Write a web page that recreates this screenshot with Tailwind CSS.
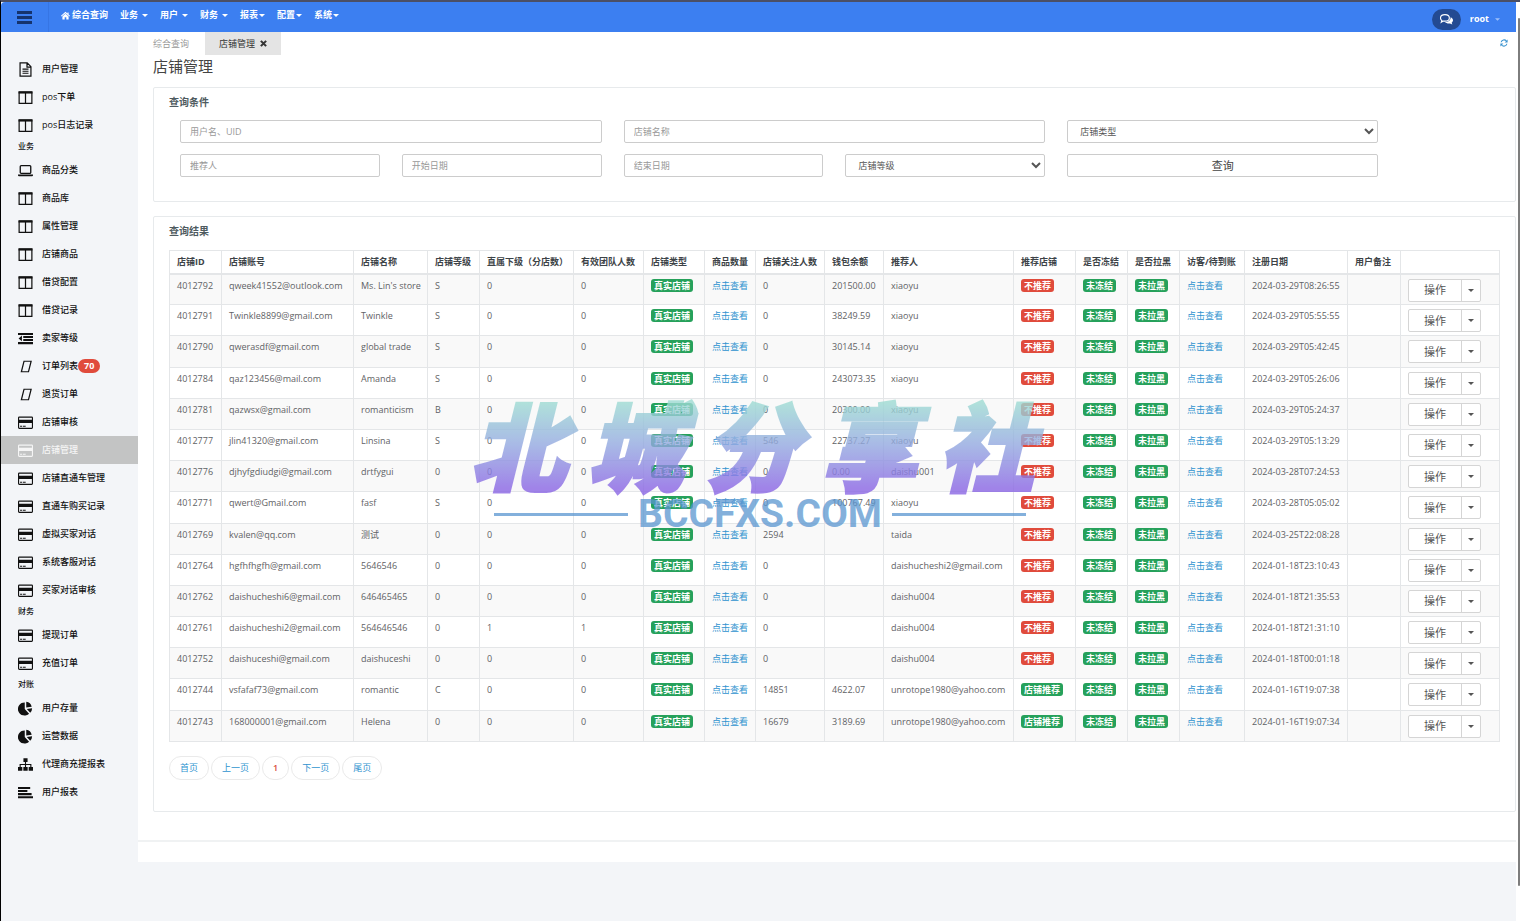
<!DOCTYPE html>
<html lang="zh-CN">
<head>
  <meta charset="UTF-8" />
  <meta name="viewport" content="width=device-width, initial-scale=1.0"/>
  <title>店铺管理</title>
  <script src="https://cdn.jsdelivr.net/npm/@tailwindcss/browser@4"></script>
</head>
<body class="bg-[#f3f5f8] min-h-screen font-['Open_Sans','Noto_Sans_CJK_SC',sans-serif] text-[9px] leading-[14px] text-[#5f6265]">

<!-- Icon sprite -->
<svg class="hidden">
  <symbol id="i-file" viewBox="0 0 16 16"><path d="M2.2 1h7.6l4 4v10H2.2z M9.6 1v4.4h4.2" fill="none" stroke="currentColor" stroke-width="1.3"/><path d="M4.8 7.6h6.4M4.8 9.8h6.4M4.8 12h6.4" stroke="currentColor" stroke-width="1.2"/></symbol>
  <symbol id="i-columns" viewBox="0 0 16 16"><path d="M1.2 2.2h13.6v12H1.2zM8 3v11" fill="none" stroke="currentColor" stroke-width="1.3"/><path d="M.6 1.4h14.8v2.4H.6z" fill="currentColor"/></symbol>
  <symbol id="i-laptop" viewBox="0 0 16 16"><rect x="2.4" y="2.8" width="11.2" height="8.2" rx="1" fill="none" stroke="currentColor" stroke-width="1.4"/><path d="M0 12.2h16v1c0 .5-.7.8-1.5.8h-13C.7 14 0 13.700 0 13.200z" fill="currentColor"/></symbol>
  <symbol id="i-outdent" viewBox="0 0 16 16"><path d="M0 2h16v2.200H0zM5.600 5.200H16v2.200H5.600zM5.600 8.500H16v2.200H5.600zM0 11.800h16V14H0zM4.200 4.900v6L.6 7.900z" fill="currentColor"/></symbol>
  <symbol id="i-slant" viewBox="0 0 16 16"><path d="M6.400 2.400h7.600l-2.800 11.200H3.600z" fill="none" stroke="currentColor" stroke-width="1.300"/></symbol>
  <symbol id="i-card" viewBox="0 0 16 16"><rect x=".6" y="2.200" width="14.800" height="12" rx=".8" fill="none" stroke="currentColor" stroke-width="1.200"/><path d="M.6 5h14.800v3.400H.6zM2.200 11.400h2.200v1.200H2.200zM5.200 11.400h3v1.200h-3z" fill="currentColor"/></symbol>
  <symbol id="i-pie" viewBox="0 0 16 16"><path d="M7.200 1.500v7l4.600 5A7 7 0 1 1 7.200 1.500zM8.800.8A6.600 6.600 0 0 1 14.600 6L8.800 7zM9.400 8.600l5.600-.8a6.600 6.600 0 0 1-2 4.800z" fill="currentColor"/></symbol>
  <symbol id="i-sitemap" viewBox="0 0 16 16"><path d="M5.800 1.400h4.400v4H5.800zM0 10.600h4.600v4H0zM5.700 10.600h4.600v4H5.700zM11.400 10.600H16v4h-4.600z" fill="currentColor"/><path d="M8 5v6M2.300 11V8h11.400v3" fill="none" stroke="currentColor" stroke-width="1.200"/></symbol>
  <symbol id="i-align" viewBox="0 0 16 16"><path d="M0 2h13v2.200H0zM0 5.300h10v2.200H0zM0 8.600h14.500v2.200H0zM0 11.900h16v2.200H0z" fill="currentColor"/></symbol>
  <symbol id="i-home" viewBox="0 0 16 16"><path d="M8 1.500 0 8.500l1 1.200L8 3.800l7 5.900 1-1.200-2.500-2.200V2.500h-2v2zM8 5l-5.500 4.600V15h4v-4h3v4h4V9.600z" fill="currentColor"/></symbol>
  <symbol id="i-caret" viewBox="0 0 8 4"><path d="M0 0h8L4 4z" fill="currentColor"/></symbol>
  <symbol id="i-comments" viewBox="0 0 16 16"><path d="M11.500 6c0 2.500-2.500 4-5.400 4L4 9.900 1.600 11.400l.7-2.200C1.200 8.400.6 7.300.6 6c0-2.400 2.500-4 5.500-4s5.400 1.600 5.400 4z" fill="none" stroke="currentColor" stroke-width="1.400"/><path d="M13 5.200c1.800.8 3 2.100 3 3.700 0 1.200-.7 2.200-1.700 3l.9 2.300-2.900-1.400c-2.500.4-4.800-.2-6.100-1.700 4 .2 7.200-2 6.800-5.900z" fill="currentColor"/></symbol>
  <symbol id="i-refresh" viewBox="0 0 16 16"><path d="M2.200 6.500A6 6 0 0 1 12.800 4M13.800 9.500A6 6 0 0 1 3.200 12" fill="none" stroke="currentColor" stroke-width="2.200"/><path d="M15.200 1v6h-6zM.8 15V9h6z" fill="currentColor"/></symbol>
  <symbol id="i-close" viewBox="0 0 8 8"><path d="M1 1l6 6M7 1L1 7" stroke="currentColor" stroke-width="2.400"/></symbol>
</svg>

<div class="min-h-screen border-l border-l-black border-t-2 border-t-[#4b4f66] pr-1 relative">

  <!-- Top bar -->
  <header class="h-[30px] bg-[#3c7ff1] rounded-tl-sm flex items-center text-white font-bold">
    <button aria-label="菜单" class="w-12 h-full border-r border-[#3675e4] flex items-center justify-center">
      <span class="w-[15px] h-[13px] flex flex-col justify-between">
        <span class="h-[3px] bg-[#15336d]"></span><span class="h-[3px] bg-[#15336d]"></span><span class="h-[3px] bg-[#15336d]"></span>
      </span>
    </button>
    <nav class="flex items-center gap-3 ml-3 pb-1">
      <a href="#" class="flex items-center gap-[2px]"><svg class="size-[9px]"><use href="#i-home"/></svg>综合查询</a>
      <a href="#" class="flex items-center gap-1">业务<svg class="w-[6px] h-[3px]"><use href="#i-caret"/></svg></a>
      <a href="#" class="flex items-center gap-1">用户<svg class="w-[6px] h-[3px]"><use href="#i-caret"/></svg></a>
      <a href="#" class="flex items-center gap-1">财务<svg class="w-[6px] h-[3px]"><use href="#i-caret"/></svg></a>
      <a href="#" class="flex items-center gap-px">报表<svg class="w-[6px] h-[3px]"><use href="#i-caret"/></svg></a>
      <a href="#" class="flex items-center gap-px">配置<svg class="w-[6px] h-[3px]"><use href="#i-caret"/></svg></a>
      <a href="#" class="flex items-center gap-px">系统<svg class="w-[6px] h-[3px]"><use href="#i-caret"/></svg></a>
    </nav>
    <div class="ml-auto flex items-center mr-4 mt-1">
      <button aria-label="消息" class="w-[29px] h-[21px] rounded-full bg-[#234a92] flex items-center justify-center"><svg class="size-[13px]"><use href="#i-comments"/></svg></button>
      <button class="ml-[9px] flex items-center gap-[6px] font-bold">root<svg class="w-[5px] h-[3px] text-[#9fc0fa]"><use href="#i-caret"/></svg></button>
    </div>
  </header>

  <div class="flex items-start">
    <!-- Sidebar -->
    <aside class="w-[137px] shrink-0 pt-[23px] text-[#111]">
      <ul id="menu"></ul>
    </aside>

    <!-- Page -->
    <main class="flex-1 min-w-0 bg-white">
      <div class="pl-[15px]">
        <div class="flex items-start">
          <a href="#" class="leading-[23px] text-[#999]">综合查询</a>
          <a href="#" class="ml-4 h-[23px] px-[14px] bg-[#e4e4e4] flex items-center gap-[5px] text-[#333]">店铺管理<svg class="size-[7px]"><use href="#i-close"/></svg></a>
          <button aria-label="刷新" class="ml-auto mt-[7px] mr-2 text-[#3a93cf]"><svg class="size-2"><use href="#i-refresh"/></svg></button>
        </div>
        <h1 class="text-[15px] leading-[22px] text-[#444]">店铺管理</h1>
      </div>

      <!-- Search form -->
      <section class="mt-[10px] ml-[15px] h-[115px] border border-[#e7eaec] rounded-xs px-[15px] pt-[7px]">
        <h2 class="text-[10px] font-bold text-[#4f5b60]">查询条件</h2>
        <form class="mt-[11px] px-[11px] grid grid-cols-12 gap-x-[22px] gap-y-[11px]">
          <input aria-label="用户名、UID" placeholder="用户名、UID" class="col-span-4 h-[23px] border border-[#ccc] rounded-xs px-[9px] placeholder:text-[#999]"/>
          <input aria-label="店铺名称" placeholder="店铺名称" class="col-span-4 h-[23px] border border-[#ccc] rounded-xs px-[9px] placeholder:text-[#999]"/>
          <select aria-label="店铺类型" class="col-span-3 h-[23px] border border-[#ccc] rounded-xs bg-white pl-2 text-[#555]"><option>店铺类型</option></select>
          <input aria-label="推荐人" placeholder="推荐人" class="col-span-2 col-start-1 h-[23px] border border-[#ccc] rounded-xs px-[9px] placeholder:text-[#999]"/>
          <input aria-label="开始日期" placeholder="开始日期" class="col-span-2 h-[23px] border border-[#ccc] rounded-xs px-[9px] placeholder:text-[#999]"/>
          <input aria-label="结束日期" placeholder="结束日期" class="col-span-2 h-[23px] border border-[#ccc] rounded-xs px-[9px] placeholder:text-[#999]"/>
          <select aria-label="店铺等级" class="col-span-2 h-[23px] border border-[#ccc] rounded-xs bg-white pl-2 text-[#555]"><option>店铺等级</option></select>
          <button type="button" class="col-span-3 h-[23px] border border-[#ccc] rounded-xs bg-white text-[11px] text-[#444]">查询</button>
        </form>
      </section>

      <!-- Results -->
      <section class="mt-[14px] ml-[15px] border border-[#e7eaec] rounded-xs px-[15px] pt-[7px] pb-[31px]">
        <h2 class="text-[10px] font-bold text-[#4f5b60]">查询结果</h2>
        <table class="mt-3 w-full h-[492px] table-fixed border-collapse whitespace-nowrap">
          <colgroup>
            <col class="w-[52px]"/><col class="w-[132px]"/><col class="w-[74px]"/><col class="w-[52px]"/><col class="w-[94px]"/><col class="w-[70px]"/>
            <col class="w-[61px]"/><col class="w-[51px]"/><col class="w-[69px]"/><col class="w-[59px]"/><col class="w-[130px]"/><col class="w-[62px]"/>
            <col class="w-[52px]"/><col class="w-[52px]"/><col class="w-[65px]"/><col class="w-[103px]"/><col class="w-[53px]"/><col/>
          </colgroup>
          <thead id="head"></thead>
          <tbody id="rows"></tbody>
        </table>
        <div class="mt-[14px] flex gap-[2px] text-[#2f93cf]">
          <a href="#" class="h-6 px-[10px] border border-[#eaeaea] rounded-full leading-[22px]">首页</a>
          <a href="#" class="h-6 px-[10px] border border-[#eaeaea] rounded-full leading-[22px]">上一页</a>
          <a href="#" class="h-6 px-[10px] border border-[#eaeaea] rounded-full leading-[22px] font-semibold text-[#d9493a]">1</a>
          <a href="#" class="h-6 px-[10px] border border-[#eaeaea] rounded-full leading-[22px]">下一页</a>
          <a href="#" class="h-6 px-[10px] border border-[#eaeaea] rounded-full leading-[22px]">尾页</a>
        </div>
      </section>
      <footer class="mt-7 h-[22px] border-t-2 border-[#f0f2f3]"></footer>
    </main>
  </div>

  <!-- Scrollbar -->
  <div class="absolute top-0 bottom-0 right-0 w-1 bg-white pt-4 pb-[35px] flex justify-end">
    <div class="w-[2px] bg-[#7d7d7d] rounded-full"></div>
  </div>
</div>

<!-- Watermark -->
<div class="absolute top-[391px] inset-x-0 flex flex-col items-center pointer-events-none">
  <div class="w-[612px] h-[108px] pl-4 pr-8 flex justify-between font-['Noto_Sans_CJK_SC'] font-black italic text-[96px] leading-[104px] text-transparent [-webkit-text-stroke:3px_transparent] bg-clip-text bg-linear-to-b from-[#9edcd3] from-10% via-[#93a8e0] to-[#8a66e4] to-90% opacity-80">
    <span>北</span><span>城</span><span>分</span><span>享</span><span>社</span>
  </div>
  <div class="w-[532px] flex items-center justify-between text-[#5a96d0]/75 font-['Roboto'] font-bold text-[39px] leading-[30px]">
    <span class="w-[134px] h-[3px] bg-[#5a96d0]/75"></span>
    <span>BCCFXS.COM</span>
    <span class="w-[134px] h-[3px] bg-[#5a96d0]/75"></span>
  </div>
</div>

<script>
  const menu = [
    ["file", "用户管理"], ["columns", "pos下单"], ["columns", "pos日志记录"],
    [null, "业务"],
    ["laptop", "商品分类"], ["columns", "商品库"], ["columns", "属性管理"], ["columns", "店铺商品"],
    ["columns", "借贷配置"], ["columns", "借贷记录"], ["outdent", "卖家等级"], ["slant", "订单列表", 70],
    ["slant", "退货订单"], ["card", "店铺审核"], ["card", "店铺管理"], ["card", "店铺直通车管理"],
    ["card", "直通车购买记录"], ["card", "虚拟买家对话"], ["card", "系统客服对话"], ["card", "买家对话审核"],
    [null, "财务"],
    ["card", "提现订单"], ["card", "充值订单"],
    [null, "对账"],
    ["pie", "用户存量"], ["pie", "运营数据"], ["sitemap", "代理商充提报表"], ["align", "用户报表"]
  ];

  document.getElementById("menu").innerHTML = menu.map(([icon, label, count]) => {
    if (!icon) return `<li class="h-[17px] pl-[17px] text-[8px] font-medium leading-[14px]">${label}</li>`;
    const state = label === "店铺管理" ? "bg-[#c3c4c4] text-[#f5f5f5]" : "";
    const badge = count ? `<span class="px-[6px] rounded-full bg-[#e04b3c] text-white font-bold">${count}</span>` : "";
    return `<li><a href="#" class="h-7 pl-[17px] flex items-center font-medium ${state}"><svg class="size-[15px] mr-[9px]"><use href="#i-${icon}"/></svg>${label}${badge}</a></li>`;
  }).join("");

  const heads = ["店铺ID", "店铺账号", "店铺名称", "店铺等级", "直属下级（分店数）", "有效团队人数", "店铺类型", "商品数量", "店铺关注人数",
    "钱包余额", "推荐人", "推荐店铺", "是否冻结", "是否拉黑", "访客/待到账", "注册日期", "用户备注", ""];

  document.getElementById("head").innerHTML = `<tr class="h-[23px]">` + heads.map(h =>
    `<th class="border border-[#e4e6e8] border-b-2 px-[7px] text-left font-bold text-[#3d4347]">${h}</th>`).join("") + "</tr>";

  // id, account, name, level, direct, team, followers, balance, referrer, recommended, date
  const shops = [
    [4012792, "qweek41552@outlook.com", "Ms. Lin's store", "S", 0, 0, 0, "201500.00", "xiaoyu", 0, "2024-03-29T08:26:55"],
    [4012791, "Twinkle8899@gmail.com", "Twinkle", "S", 0, 0, 0, "38249.59", "xiaoyu", 0, "2024-03-29T05:55:55"],
    [4012790, "qwerasdf@gmail.com", "global trade", "S", 0, 0, 0, "30145.14", "xiaoyu", 0, "2024-03-29T05:42:45"],
    [4012784, "qaz123456@mail.com", "Amanda", "S", 0, 0, 0, "243073.35", "xiaoyu", 0, "2024-03-29T05:26:06"],
    [4012781, "qazwsx@gmail.com", "romanticism", "B", 0, 0, 0, "20300.00", "xiaoyu", 0, "2024-03-29T05:24:37"],
    [4012777, "jlin41320@gmail.com", "Linsina", "S", 0, 0, 546, "22737.27", "xiaoyu", 0, "2024-03-29T05:13:29"],
    [4012776, "djhyfgdiudgi@gmail.com", "drtfygui", "0", 0, 0, 0, "0.00", "daishu001", 0, "2024-03-28T07:24:53"],
    [4012771, "qwert@Gmail.com", "fasf", "S", 0, 0, 0, "100767.49", "xiaoyu", 0, "2024-03-28T05:05:02"],
    [4012769, "kvalen@qq.com", "测试", "0", 0, 0, 2594, "", "taida", 0, "2024-03-25T22:08:28"],
    [4012764, "hgfhfhgfh@gmail.com", "5646546", "0", 0, 0, 0, "", "daishucheshi2@gmail.com", 0, "2024-01-18T23:10:43"],
    [4012762, "daishucheshi6@gmail.com", "646465465", "0", 0, 0, 0, "", "daishu004", 0, "2024-01-18T21:35:53"],
    [4012761, "daishucheshi2@gmail.com", "564646546", "0", 1, 1, 0, "", "daishu004", 0, "2024-01-18T21:31:10"],
    [4012752, "daishuceshi@gmail.com", "daishuceshi", "0", 0, 0, 0, "", "daishu004", 0, "2024-01-18T00:01:18"],
    [4012744, "vsfafaf73@gmail.com", "romantic", "C", 0, 0, 14851, "4622.07", "unrotope1980@yahoo.com", 1, "2024-01-16T19:07:38"],
    [4012743, "168000001@gmail.com", "Helena", "0", 0, 0, 16679, "3189.69", "unrotope1980@yahoo.com", 1, "2024-01-16T19:07:34"]
  ];

  const green = t => `<span class="inline-block px-[3px] rounded-[3px] bg-[#26a15b] text-white font-bold leading-[13px]">${t}</span>`;
  const red = t => `<span class="inline-block px-[3px] rounded-[3px] bg-[#e04b3c] text-white font-bold leading-[13px]">${t}</span>`;
  const look = `<a href="#" class="text-[#2f93cf]">点击查看</a>`;
  const actions = `<div class="inline-flex h-[23px] border border-[#d5d5d5] rounded-xs bg-white text-[#555]">
    <button class="w-[52px] text-[11px]">操作</button>
    <button aria-label="更多操作" class="w-[19px] border-l border-[#d5d5d5] flex items-center justify-center"><svg class="w-[6px] h-[3px]"><use href="#i-caret"/></svg></button></div>`;

  document.getElementById("rows").innerHTML = shops.map(s => {
    const cells = [s[0], s[1], s[2], s[3], s[4], s[5], green("真实店铺"), look, s[6], s[7], s[8],
      s[9] ? green("店铺推荐") : red("不推荐"), green("未冻结"), green("未拉黑"), look, s[10], "", actions];
    return `<tr class="h-[31px] odd:bg-[#f9f9f9]">` + cells.map(c =>
      `<td class="border border-[#e4e6e8] px-[7px] pt-1 align-top">${c}</td>`).join("") + "</tr>";
  }).join("");
</script>
</body>
</html>
